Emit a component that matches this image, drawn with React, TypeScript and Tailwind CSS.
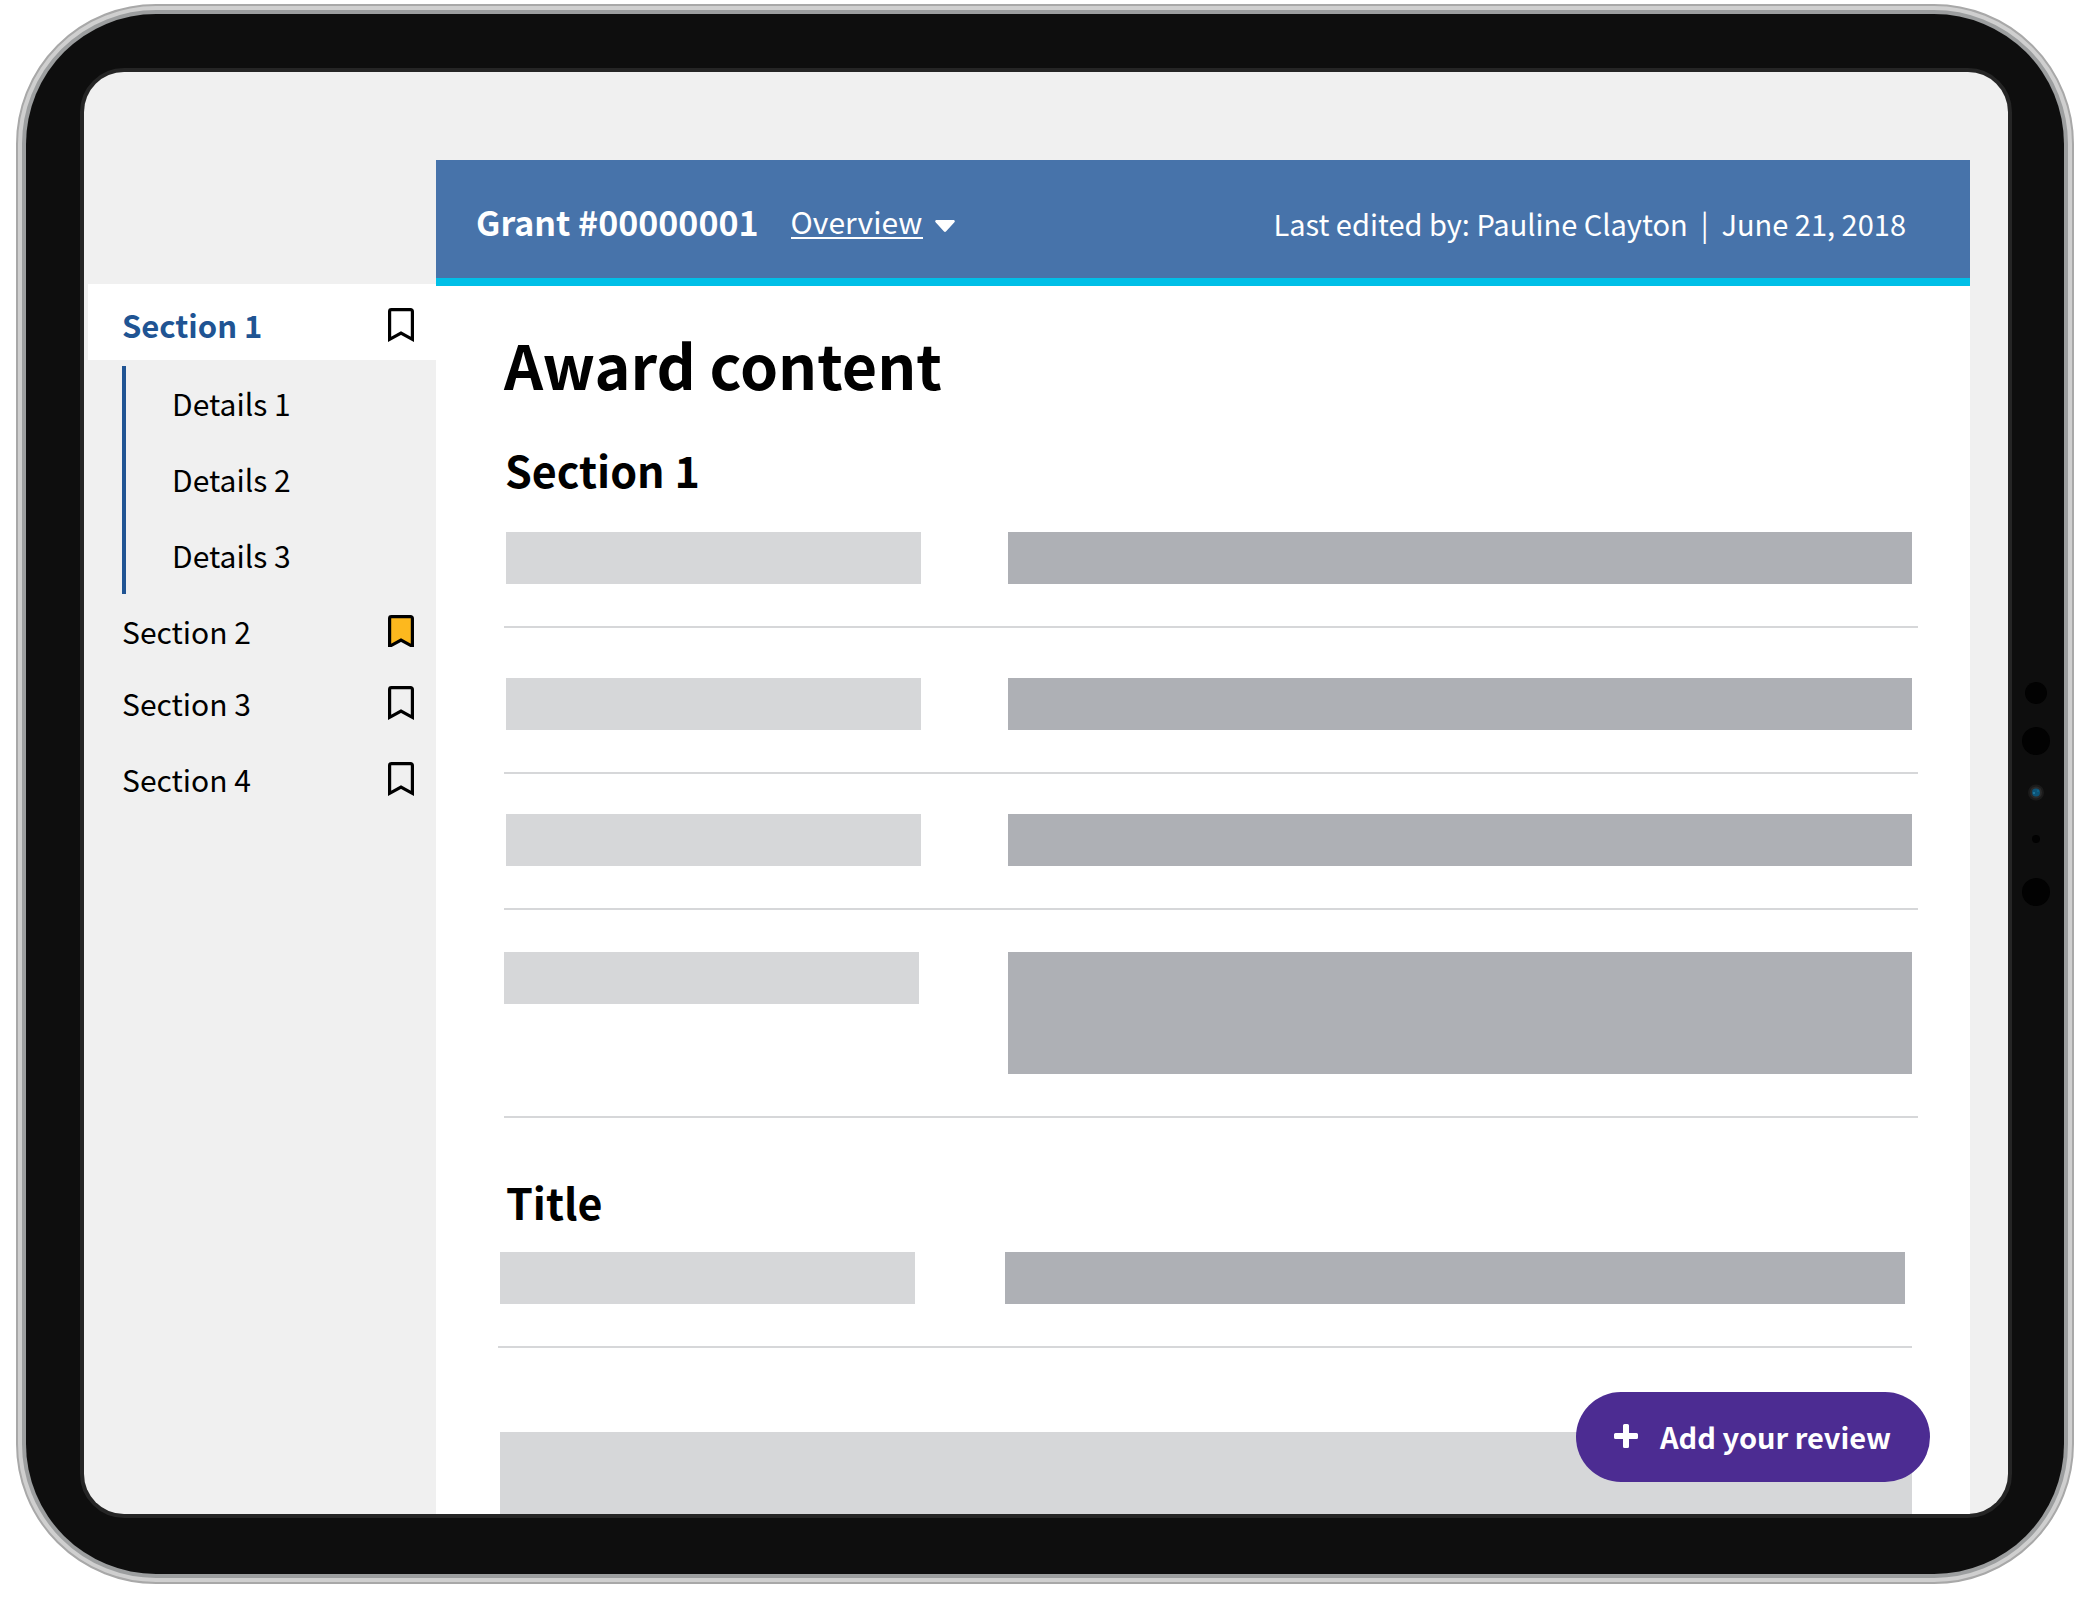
import React, { useState } from 'react';

interface Section {
  id: number;
  label: string;
  details?: string[];
  rowClass: string;
}

const SECTIONS: Section[] = [
  { id: 1, label: 'Section 1', details: ['Details 1', 'Details 2', 'Details 3'], rowClass: 'h-[76px] pt-1.5' },
  { id: 2, label: 'Section 2', rowClass: 'mt-0.5 h-[72px] pb-0.5' },
  { id: 3, label: 'Section 3', rowClass: 'h-[72px] pb-0.5' },
  { id: 4, label: 'Section 4', rowClass: 'mt-1 h-[72px] pb-0.5' },
];

const ROWS = [
  { rowClass: 'gap-[87px] pl-0.5', value: 'h-[52px]' },
  { rowClass: 'gap-[87px] pl-0.5 pt-[50px]', value: 'h-[52px]' },
  { rowClass: 'gap-[87px] pl-0.5 pt-10', value: 'h-[52px]' },
  { rowClass: 'gap-[89px] pt-[42px]', value: 'h-[122px]' },
];

const BookmarkIcon = ({ filled }: { filled: boolean }) => (
  <svg
    width="26"
    height={filled ? 32 : 34}
    viewBox={filled ? '0 0 26 32' : '0 0 26 34'}
    fill={filled ? '#fdb81e' : 'none'}
    stroke="#000"
    strokeWidth="3.2"
  >
    <path d="M1.6 31.3V3.4a1.8 1.8 0 0 1 1.800-1.800h19.200a1.800 1.800 0 0 1 1.800 1.800v27.900L13 25Z" />
  </svg>
);

const Sidebar: React.FC = () => {
  const [active, setActive] = useState(1);
  const [saved, setSaved] = useState<number[]>([2]);

  const toggle = (id: number) =>
    setSaved(prev => (prev.includes(id) ? prev.filter(s => s !== id) : [...prev, id]));

  return (
    <nav className="w-[352px] shrink-0 pl-1 pt-[212px] text-[30px] leading-10">
      <ul>
        {SECTIONS.map(section => (
          <li key={section.id}>
            <div
              className={`flex items-center justify-between pl-[34px] pr-[22px] ${section.rowClass} ${
                active === section.id ? 'bg-white text-[31px] font-bold text-[#205493]' : 'text-black'
              }`}
            >
              <a href={`#section-${section.id}`} onClick={() => setActive(section.id)}>{section.label}</a>
              <button aria-label={`Bookmark ${section.label}`} aria-pressed={saved.includes(section.id)} onClick={() => toggle(section.id)}>
                <BookmarkIcon filled={saved.includes(section.id)} />
              </button>
            </div>
            {section.details && (
              <ul className="ml-[34px] mt-1.5 border-l-4 border-[#205493] pl-[46px]">
                {section.details.map(d => (
                  <li key={d} className="flex h-[76px] items-center pb-0.5">
                    <a href={`#${d.toLowerCase().replace(' ', '-')}`}>{d}</a>
                  </li>
                ))}
              </ul>
            )}
          </li>
        ))}
      </ul>
    </nav>
  );
};

const Header: React.FC = () => (
  <header className="flex h-[126px] items-center justify-between border-b-8 border-[#00bfe7] bg-[#4773aa] pl-10 pr-16 pt-2 text-white">
    <div className="flex items-center gap-8 pb-0.5">
      <span className="text-[34px] font-bold leading-10">Grant #00000001</span>
      <div className="flex items-center gap-3">
        <select aria-label="Grant view" className="h-[34px] appearance-none border-b-2 border-white bg-transparent text-[30px] leading-8">
          <option>Overview</option>
        </select>
        <svg className="mt-2" width="20" height="12" viewBox="0 0 20 12" fill="currentColor">
          <path d="M1.6 0h16.8c1.3 0 1.9 1.4 1 2.3l-8.2 9a1.6 1.6 0 0 1-2.4 0l-8.2-9C-.3 1.4.3 0 1.6 0Z" />
        </svg>
      </div>
    </div>
    <p className="text-[29px] leading-10">Last edited by: Pauline Clayton&nbsp; |&nbsp; June 21, 2018</p>
  </header>
);

/* Front camera and sensors in the right bezel */
const Sensors = () => (
  <svg width="28" height="226" viewBox="0 0 28 226">
    <circle cx="14" cy="13" r="11" fill="#020202" />
    <circle cx="14" cy="61" r="14" fill="#020202" />
    <circle cx="14" cy="112.5" r="8" fill="#1b1b1b" />
    <circle cx="14" cy="112.5" r="6" fill="#2a2a2a" />
    <circle cx="14" cy="112.5" r="4" fill="#0c5478" />
    <circle cx="12" cy="113" r="1" fill="#2280a8" />
    <circle cx="16" cy="111" r="1" fill="#11688f" />
    <circle cx="14" cy="159" r="4" fill="#020202" />
    <circle cx="14" cy="212" r="14" fill="#020202" />
  </svg>
);

export default function App() {
  return (
    <div className="bg-white pb-5 pl-4 pr-[22px] pt-1 font-['Noto_Sans_CJK_JP','Noto_Sans',sans-serif] text-black">
      <div className="rounded-[140px] border-2 border-[#a8a8a8] bg-[#a8a8a8]">
        <div className="rounded-[138px] border-4 border-[#cfcfcf] bg-[#cfcfcf]">
          <div className="rounded-[134px] border-4 border-[#9c9e9f] bg-[#9c9e9f]">
            <div className="flex items-center rounded-[130px] bg-[#0e0e0e] pb-14 pl-[54px] pt-[54px]">
              <div className="min-w-0 flex-1 rounded-[44px] border-4 border-[#252525] bg-[#252525]">
                <div className="relative flex overflow-hidden rounded-[40px] bg-[#f0f0f0]">
                  <Sidebar />

                  <main className="mr-[38px] mt-[88px] min-w-0 flex-1 bg-white">
                    <Header />

                    <section id="section-1" className="pl-[68px] pr-[52px] pt-[42px]">
                      <h1 className="text-[61px] font-bold leading-[72px]">Award content</h1>
                      <h2 className="mb-[39px] mt-[45px] pl-px text-[43px] font-bold leading-[48px]">Section 1</h2>
                      {ROWS.map((row, i) => (
                        <div key={i} className={`grid grid-cols-[415fr_904fr] border-b-2 border-[#d6d7d9] pb-[42px] pr-1.5 ${row.rowClass}`}>
                          <div className="h-[52px] bg-[#d6d7d9]" />
                          <div className={`bg-[#aeb0b5] ${row.value}`} />
                        </div>
                      ))}
                    </section>

                    <section className="pl-[62px] pr-[58px] pt-[59px]">
                      <h2 className="mb-[27px] pl-2 text-[43px] font-bold leading-[48px]">Title</h2>
                      <div className="grid grid-cols-[415fr_900fr] gap-[90px] border-b-2 border-[#d6d7d9] pb-[42px] pl-0.5 pr-[7px]">
                        <div className="h-[52px] bg-[#d6d7d9]" />
                        <div className="h-[52px] bg-[#aeb0b5]" />
                      </div>
                      <div className="ml-0.5 mt-[84px] h-[82px] bg-[#d6d7d9]" />
                    </section>
                  </main>

                  <button className="absolute bottom-8 right-[78px] flex h-[90px] w-[354px] items-center gap-[22px] rounded-full bg-[#4c2c92] pb-0.5 pl-[38px] text-[29px] font-bold leading-10 text-white">
                    <svg width="24" height="24" viewBox="0 0 24 24" fill="currentColor">
                      <path d="M10.5 0h3A1.5 1.5 0 0 1 15 1.5V9h7.5A1.5 1.5 0 0 1 24 10.5v3a1.5 1.5 0 0 1-1.5 1.5H15v7.5a1.5 1.5 0 0 1-1.5 1.5h-3A1.5 1.5 0 0 1 9 22.5V15H1.5A1.5 1.5 0 0 1 0 13.5v-3A1.5 1.5 0 0 1 1.5 9H9V1.5A1.5 1.5 0 0 1 10.5 0Z" />
                    </svg>
                    Add your review
                  </button>
                </div>
              </div>
              <div className="flex w-[52px] shrink-0 justify-center pr-1">
                <Sensors />
              </div>
            </div>
          </div>
        </div>
      </div>
    </div>
  );
}
